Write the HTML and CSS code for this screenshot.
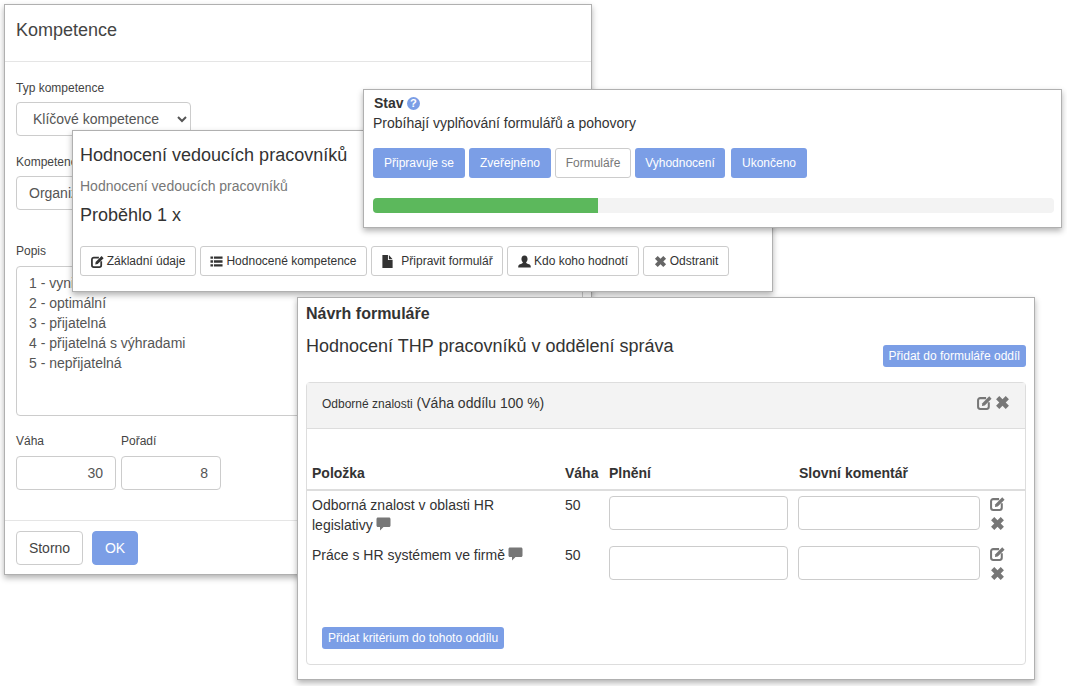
FILE: index.html
```html
<!DOCTYPE html>
<html lang="cs">
<head>
<meta charset="utf-8">
<title>Kompetence</title>
<link rel="stylesheet" href="styles.css">
</head>
<body>
<svg class="defs" width="0" height="0">
  <symbol id="i-edit" viewBox="0 0 14 14"><path class="edit-box" d="M8.500 2.900H3A2 2 0 0 0 1 4.900V11a2 2 0 0 0 2 2H9a2 2 0 0 0 2-2V6.800"/><path d="M5 7.600 11.400 1.200 13.600 3.400 7.200 9.800 4.600 10.200Z"/></symbol>
  <symbol id="i-x" viewBox="0 0 14 14"><path d="M4 1 7 4 10 1 13 4 10 7 13 10 10 13 7 10 4 13 1 10 4 7 1 4Z"/></symbol>
  <symbol id="i-list" viewBox="0 0 14 14"><path d="M.5 1.500h2.700v2.600H.5ZM4.200 1.500h9.300v2.600H4.200ZM.5 5.700h2.700v2.600H.5ZM4.200 5.700h9.300v2.600H4.200ZM.5 9.900h2.700v2.600H.5ZM4.200 9.900h9.300v2.600H4.200Z"/></symbol>
  <symbol id="i-file" viewBox="0 0 14 14"><path d="M1.500 0H7.500V5.500H12.500V14H1.500ZM8.500 0 12.500 4.500H8.500Z"/></symbol>
  <symbol id="i-user" viewBox="0 0 14 14"><path d="M7 .5C9.200.5 10.300 2.200 10.300 4.300 10.300 6 9.500 7.300 8.700 8 8.700 9 10.300 9.300 12 10 13.200 10.500 13.800 11.400 13.800 13.500H.2C.2 11.400.8 10.500 2 10 3.700 9.300 5.300 9 5.300 8 4.500 7.300 3.700 6 3.700 4.300 3.700 2.200 4.800.5 7 .5Z"/></symbol>
  <symbol id="i-comment" viewBox="0 0 14 14"><path d="M1.500.5H12.500C13.400.5 14 1.100 14 2V8.500C14 9.400 13.400 10 12.500 10H7L3.500 13.500V10H1.500C.6 10 0 9.400 0 8.500V2C0 1.100.6.500 1.500.5Z"/></symbol>
</svg>

<div class="desktop">

  <section class="window win-kompetence">
    <header class="modal-head">Kompetence</header>
    <div class="modal-body">
      <label class="lbl">Typ kompetence</label>
      <select class="ctl sel-typ"><option>Klíčové kompetence</option></select>
      <label class="lbl lbl-komp">Kompetence</label>
      <select class="ctl sel-komp"><option>Organizační schopnosti</option></select>
      <label class="lbl lbl-popis">Popis</label>
      <textarea class="ctl area" readonly>1 - vynikající
2 - optimální
3 - přijatelná
4 - přijatelná s výhradami
5 - nepřijatelná</textarea>
      <div class="num-row">
        <div class="num-field">
          <label class="lbl lbl-num">Váha</label>
          <input class="ctl num" value="30" readonly>
        </div>
        <div class="num-field">
          <label class="lbl lbl-num">Pořadí</label>
          <input class="ctl num" value="8" readonly>
        </div>
      </div>
    </div>
    <footer class="modal-foot">
      <button class="btn btn-storno">Storno</button>
      <button class="btn btn-ok">OK</button>
    </footer>
  </section>

  <section class="window win-hodnoceni">
    <h2 class="big">Hodnocení vedoucích pracovníků</h2>
    <p class="sub">Hodnocení vedoucích pracovníků</p>
    <p class="big done">Proběhlo 1 x</p>
    <div class="tools">
      <button class="tool t1"><svg class="ico"><use href="#i-edit"/></svg>Základní údaje</button>
      <button class="tool t2"><svg class="ico"><use href="#i-list"/></svg>Hodnocené kompetence</button>
      <button class="tool t3"><svg class="ico ico-wide"><use href="#i-file"/></svg>Připravit formulář</button>
      <button class="tool t4"><svg class="ico"><use href="#i-user"/></svg>Kdo koho hodnotí</button>
      <button class="tool t5"><svg class="ico ico-grey"><use href="#i-x"/></svg>Odstranit</button>
    </div>
  </section>

  <section class="window win-stav">
    <div class="stav-title"><b>Stav</b>
      <svg class="help" viewBox="0 0 14 14"><circle cx="7" cy="7" r="7"/><text x="7" y="11" text-anchor="middle">?</text></svg>
    </div>
    <p class="stav-text">Probíhají vyplňování formulářů a pohovory</p>
    <div class="steps">
      <span class="step s1">Připravuje se</span>
      <span class="step s2">Zveřejněno</span>
      <span class="step step-off s3">Formuláře</span>
      <span class="step s4">Vyhodnocení</span>
      <span class="step s5">Ukončeno</span>
    </div>
    <div class="progress"><div class="bar"></div></div>
  </section>

  <section class="window win-navrh">
    <h3 class="navrh-title">Návrh formuláře</h3>
    <div class="navrh-head">
      <h2 class="navrh-name">Hodnocení THP pracovníků v oddělení správa</h2>
      <span class="mini mini-oddil">Přidat do formuláře oddíl</span>
    </div>
    <div class="panel">
      <div class="panel-head">
        <span class="panel-title"><small>Odborné znalosti</small> (Váha oddílu 100 %)</span>
        <span class="panel-icons">
          <svg class="ic15"><use href="#i-edit"/></svg>
          <svg class="ic15"><use href="#i-x"/></svg>
        </span>
      </div>
      <table class="tbl">
        <colgroup><col class="c1"><col class="c2"><col class="c3"><col class="c4"><col class="c5"></colgroup>
        <thead>
          <tr><th>Položka</th><th>Váha</th><th>Plnění</th><th class="th-kom">Slovní komentář</th><th></th></tr>
        </thead>
        <tbody>
          <tr>
            <td class="txt">Odborná znalost v oblasti HR legislativy <svg class="cmt"><use href="#i-comment"/></svg></td>
            <td class="txt">50</td>
            <td><input class="ctl cell" readonly></td>
            <td><input class="ctl cell" readonly></td>
            <td class="acts"><svg class="ic15"><use href="#i-edit"/></svg><svg class="ic15"><use href="#i-x"/></svg></td>
          </tr>
          <tr>
            <td class="txt">Práce s HR systémem ve firmě <svg class="cmt"><use href="#i-comment"/></svg></td>
            <td class="txt">50</td>
            <td><input class="ctl cell" readonly></td>
            <td><input class="ctl cell" readonly></td>
            <td class="acts"><svg class="ic15"><use href="#i-edit"/></svg><svg class="ic15"><use href="#i-x"/></svg></td>
          </tr>
        </tbody>
      </table>
      <div class="panel-foot"><span class="mini">Přidat kritérium do tohoto oddílu</span></div>
    </div>
  </section>

</div>
</body>
</html>
```

FILE: styles.css
```css
* { box-sizing: border-box; }
html, body { margin: 0; padding: 0; background: #fff; }
body { font-family: "Liberation Sans", Arial, sans-serif; font-size: 14px; color: #333; overflow: hidden; }
.defs { position: absolute; }
.desktop { position: relative; width: 1067px; height: 686px; overflow: hidden; }
svg { fill: currentColor; }
.edit-box { fill: none; stroke: currentColor; stroke-width: 1.9; }

.window {
  position: absolute;
  background: #fff;
  border: 1px solid #b0b0b0;
  box-shadow: 0 3px 6px rgba(0, 0, 0, .3);
}
.win-kompetence { left: 4px; top: 4px; width: 588px; height: 571px; display: flex; flex-direction: column; }
.win-hodnoceni { left: 72px; top: 130px; width: 701px; height: 162px; padding: 14px 7px 0; }
.win-stav { left: 363px; top: 89px; width: 699px; height: 139px; padding: 5px 7px 0 9px; }
.win-navrh { left: 297px; top: 297px; width: 738px; height: 383px; padding: 7px 8px 0; }

.modal-head { height: 57px; padding: 15px 11px 0; font-size: 18px; line-height: 20px; color: #444; border-bottom: 1px solid #e5e5e5; flex: none; }
.modal-body { flex: 1; padding: 19px 11px 0; }
.modal-foot { flex: none; height: 54px; padding: 10px 11px 0; border-top: 1px solid #e5e5e5; display: flex; gap: 9px; align-items: flex-start; }

.lbl { display: block; font-size: 12px; line-height: 14px; color: #444; margin-bottom: 7px; }
.lbl-komp { margin-top: 19px; }
.lbl-popis { margin-top: 34px; margin-bottom: 8px; }
.lbl-num { margin-bottom: 8px; }
.ctl { display: block; font-family: inherit; font-size: 14px; color: #555; background: #fff; border: 1px solid #ccc; border-radius: 4px; outline: none; }
.sel-typ { width: 175px; height: 34px; padding-left: 12px; }
.sel-komp { width: 567px; height: 34px; padding-left: 8px; }
.area { width: 567px; height: 150px; padding: 6px 12px; line-height: 20px; resize: none; overflow: hidden; }
.num-row { display: flex; gap: 5px; margin-top: 18px; }
.num { width: 100px; height: 34px; padding: 0 12px; text-align: right; }

.btn { height: 34px; border-radius: 4px; font-family: inherit; font-size: 14px; padding: 0; }
.btn-storno { width: 67px; background: #fff; border: 1px solid #ccc; color: #444; }
.btn-ok { width: 46px; background: #7b9ee6; border: 1px solid #7b9ee6; color: #fff; }

.big { margin: 0; font-size: 18px; font-weight: 400; line-height: 20px; color: #333; }
.sub { margin: 11px 0 0; font-size: 14px; line-height: 20px; color: #777; }
.done { margin-top: 9px; }
.tools { display: flex; gap: 4px; margin-top: 21px; }
.tool { height: 30px; padding: 0; background: #fff; border: 1px solid #ccc; border-radius: 3px; font-family: inherit; font-size: 12px; color: #333; display: flex; align-items: center; justify-content: center; }
.t1 { width: 116px; } .t2 { width: 167px; } .t3 { width: 132px; } .t4 { width: 132px; } .t5 { width: 86px; }
.ico { width: 13px; height: 13px; margin-right: 3px; flex: none; }
.ico-wide { margin-right: 7px; }
.ico-grey { color: #666; margin-right: 3px; }

.stav-title { font-size: 14px; line-height: 16px; display: flex; align-items: center; gap: 3px; color: #333; margin-left: 1px; }
.stav-title b { font-size: 14px; font-weight: 700; }
.help { width: 13px; height: 13px; fill: #7b9ee6; }
.help text { fill: #fff; font-size: 12px; font-weight: 700; font-family: "Liberation Sans", sans-serif; }
.stav-text { margin: 2px 0 0; line-height: 20px; font-size: 14px; color: #333; }
.steps { display: flex; gap: 4px; margin: 15px 0 0; }
.step { height: 30px; line-height: 30px; text-align: center; font-size: 12px; color: #fff; background: #7b9ee6; border-radius: 3px; }
.s1 { width: 92px; } .s2 { width: 82px; } .s3 { width: 76px; } .s4 { width: 90px; } .s5 { width: 76px; margin-left: 2px; }
.step-off { background: #fff; border: 1px solid #ccc; color: #777; line-height: 28px; }
.progress { width: 681px; height: 15px; margin: 20px 0 0; background: #f3f3f3; border-radius: 4px; overflow: hidden; }
.bar { width: 225px; height: 100%; background: #5cb85c; }

.navrh-title { margin: 0; font-size: 16px; line-height: 18px; font-weight: 700; color: #333; }
.navrh-head { display: flex; justify-content: space-between; align-items: flex-start; height: 59px; padding: 0; }
.navrh-name { margin: 13px 0 0; font-size: 18px; font-weight: 400; line-height: 20px; color: #333; }
.mini { display: inline-block; height: 22px; line-height: 22px; padding: 0 6px; background: #7b9ee6; color: #fff; font-size: 12px; border-radius: 3px; white-space: nowrap; }
.mini-oddil { margin-top: 22px; }

.panel { width: 720px; height: 283px; border: 1px solid #ddd; border-radius: 4px; }
.panel-head { height: 46px; background: #f3f3f3; border-bottom: 1px solid #ddd; padding: 0 15px; display: flex; justify-content: space-between; align-items: center; }
.panel-title { font-size: 14px; line-height: 20px; margin-bottom: 4px; }
.panel-title small { font-size: 12px; }
.panel-icons { display: flex; gap: 3px; color: #777; margin-bottom: 6px; }
.ic15 { width: 15px; height: 15px; display: block; color: #777; }

.tbl { width: 718px; table-layout: fixed; border-collapse: collapse; margin-top: 34px; }
.c1 { width: 253px; } .c2 { width: 44px; } .c3 { width: 189px; } .c4 { width: 192px; } .c5 { width: 40px; }
.tbl th { text-align: left; font-size: 14px; line-height: 20px; padding: 0 5px 6px; border-bottom: 2px solid #ddd; }
.tbl .th-kom { padding-left: 6px; }
.tbl td { vertical-align: top; padding: 5px; height: 50px; line-height: 20px; font-size: 14px; }
.tbl td.txt { padding-top: 4px; }
.cell { width: 100%; height: 34px; }
.acts .ic15 { margin-bottom: 5px; }
.cmt { width: 15px; height: 14px; color: #777; vertical-align: -1px; margin-left: -1px; }
.panel-foot { padding: 36px 15px 0; }
```
